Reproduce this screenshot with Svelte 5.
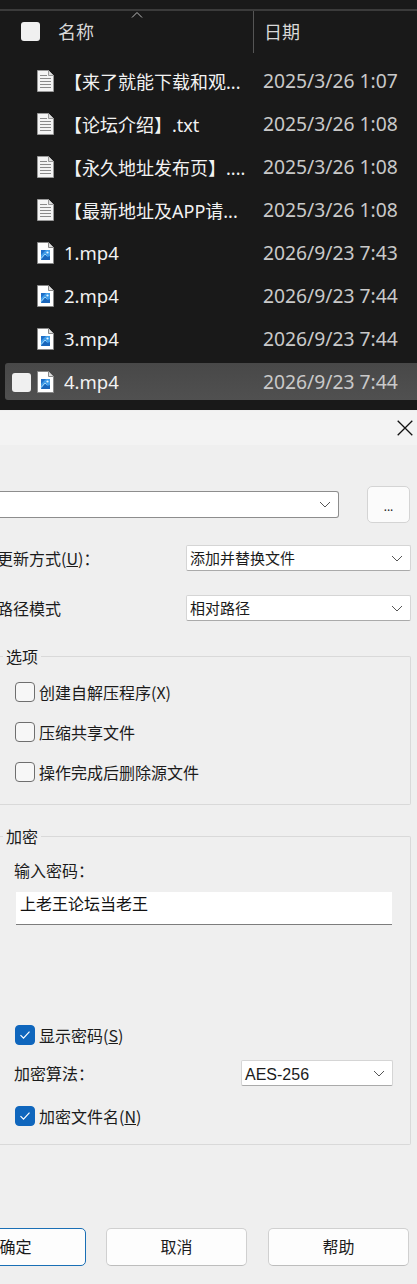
<script>
  const files = [
    { name: '【来了就能下载和观...', date: '2025/3/26 1:07', kind: 'txt' },
    { name: '【论坛介绍】.txt', date: '2025/3/26 1:08', kind: 'txt' },
    { name: '【永久地址发布页】....', date: '2025/3/26 1:08', kind: 'txt' },
    { name: '【最新地址及APP请...', date: '2025/3/26 1:08', kind: 'txt' },
    { name: '1.mp4', date: '2026/9/23 7:43', kind: 'mp4' },
    { name: '2.mp4', date: '2026/9/23 7:44', kind: 'mp4' },
    { name: '3.mp4', date: '2026/9/23 7:44', kind: 'mp4' },
    { name: '4.mp4', date: '2026/9/23 7:44', kind: 'mp4', selected: true }
  ];
</script>

{#snippet chevron()}
  <svg class="chev" width="12" height="7" viewBox="0 0 12 7"><path d="M1 1l5 5 5-5" fill="none" stroke="#555" stroke-width="1"/></svg>
{/snippet}

{#snippet check(on)}
  <span class="check" class:on>
    {#if on}
      <svg width="12" height="10" viewBox="0 0 12 10"><path d="M1.5 5.2l3 3 6-6.5" fill="none" stroke="#fff" stroke-width="1.2"/></svg>
    {/if}
  </span>
{/snippet}

<div class="page">
  <section class="explorer">
    <div class="rule"></div>
    <header class="head">
      <span class="box head-box"></span>
      <span class="head-name">名称</span>
      <svg class="sort" width="12" height="6" viewBox="0 0 12 6"><path d="M1 5.5l5-5 5 5" fill="none" stroke="#bbb" stroke-width="1"/></svg>
      <span class="sep"></span>
      <span class="head-date">日期</span>
    </header>
    <div class="rows">
      {#each files as f}
        <div class="row" class:selected={f.selected}>
          {#if f.selected}<span class="box row-box"></span>{/if}
          {#if f.kind === 'txt'}
            <svg class="ficon" width="17" height="22" viewBox="0 0 17 22">
              <path d="M0.5 0.5h11l5 5v16h-16z" fill="#f4f4f4" stroke="#999"/>
              <path d="M11.5 .5v5h5" fill="#ddd" stroke="#999"/>
              <path d="M3 5.5h7M3 8.5h11M3 11.5h11M3 14.5h11M3 17.5h11" stroke="#8a8a8a" stroke-width="1"/>
            </svg>
          {:else}
            <svg class="ficon" width="17" height="22" viewBox="0 0 17 22">
              <path d="M0.5 0.5h11l5 5v16h-16z" fill="#fff" stroke="#888"/>
              <path d="M11.5 .5v5h5" fill="#ddd" stroke="#888"/>
              <rect x="4" y="8" width="9" height="10" fill="#3f9ce8"/>
              <path d="M4 8h5l-5 5z" fill="#1f6fc8"/>
              <path d="M4 18l4-5.500 2.500 2.500 2.500-1v4z" fill="#1a66bb"/>
              <path d="M4 16.500l4-4.500 1.500 1.500" fill="none" stroke="#9fd4f7" stroke-width="1"/>
              <circle cx="10.500" cy="10.500" r="1.100" fill="#e8f5ff"/>
            </svg>
          {/if}
          <span class="fname" class:video={f.kind === 'mp4'}>{f.name}</span>
          <span class="fdate">{f.date}</span>
        </div>
      {/each}
    </div>
  </section>

  <section class="dialog">
    <div class="titlebar">
      <svg width="16" height="16" viewBox="0 0 16 16"><path d="M.7.700l14.600 14.600M15.300.700L.7 15.300" stroke="#111" stroke-width="1.300" fill="none"/></svg>
    </div>
    <div class="body">
      <div class="path-row">
        <div class="combo">{@render chevron()}</div>
        <button class="dots">...</button>
      </div>
      <div class="field-row first">
        <span class="label">更新方式(<u>U</u>)：</span>
        <div class="select wide">添加并替换文件{@render chevron()}</div>
      </div>
      <div class="field-row second">
        <span class="label">路径模式</span>
        <div class="select wide">相对路径{@render chevron()}</div>
      </div>

      <fieldset class="group options">
        <legend>选项</legend>
        <label class="opt">{@render check(false)}创建自解压程序(X)</label>
        <label class="opt">{@render check(false)}压缩共享文件</label>
        <label class="opt">{@render check(false)}操作完成后删除源文件</label>
      </fieldset>

      <fieldset class="group crypt">
        <legend>加密</legend>
        <div class="pw-label">输入密码：</div>
        <div class="pw">上老王论坛当老王</div>
        <label class="opt show">{@render check(true)}显示密码(<u>S</u>)</label>
        <div class="algo">
          <span>加密算法：</span>
          <div class="select narrow">AES-256{@render chevron()}</div>
        </div>
        <label class="opt encname">{@render check(true)}加密文件名(<u>N</u>)</label>
      </fieldset>

      <div class="actions">
        <button class="btn ok">确定</button>
        <button class="btn">取消</button>
        <button class="btn last">帮助</button>
      </div>
    </div>
  </section>
</div>

<style>
  :global(body) { margin: 0; background: #efefef; }
  .page {
    width: 417px; height: 1284px; overflow: hidden;
    font-family: "Noto Sans CJK SC", "Noto Sans", sans-serif;
  }
  .explorer { background: #191919; height: 410px; padding-top: 9px; box-sizing: border-box; }
  .rule { height: 2px; background: #3b3b3b; }
  .head { position: relative; display: flex; align-items: center; height: 41px; color: #d8d8d8; font-size: 18px; }
  .box { display: block; width: 19px; height: 19px; border-radius: 3px; background: #f0f0f0; flex: none; }
  .head-box { margin-left: 21px; }
  .head-name { margin-left: 18px; width: 195px; padding-bottom: 2px; }
  .sort { position: absolute; left: 131px; top: 1px; }
  .sep { width: 1px; height: 42px; background: #555; flex: none; }
  .head-date { margin-left: 10px; padding-bottom: 2px; }
  .rows { padding-top: 7px; }
  .row { position: relative; height: 43px; display: flex; align-items: center; margin-left: 5px; padding-left: 32px; border-radius: 3px 0 0 3px; }
  .row.selected { height: 37px; margin-top: 3px; background: linear-gradient(#484848, #505050); }
  .row-box { position: absolute; left: 7px; top: 10px; }
  .ficon { flex: none; }
  .fname { color: #f2f2f2; font-size: 18px; margin-left: 10px; width: 189px; white-space: nowrap; overflow: hidden; font-family: "Noto Sans", "Noto Sans CJK SC", sans-serif; }
  .fname.video { font-size: 18.500px; }
  .fdate { color: #c9c9c9; font-size: 19.300px; font-family: "Noto Sans", sans-serif; white-space: nowrap; margin-left: 10px; }
  .dialog { margin-top: 1px; }
  .titlebar { height: 34px; background: #f3f3f3; display: flex; justify-content: flex-end; align-items: center; padding-right: 4px; box-sizing: border-box; }
  .body { height: 839px; box-sizing: border-box; padding-right: 7px; font-size: 16px; color: #1b1b1b; }
  .path-row { display: flex; align-items: center; padding-top: 41px; }
  .combo { width: 339px; height: 27px; box-sizing: border-box; background: #fff; border: 1px solid #8d8d8d; border-left: none; border-radius: 0 3px 3px 0; display: flex; align-items: center; justify-content: flex-end; padding-right: 7px; }
  .dots { margin-left: 28px; width: 43px; height: 37px; background: #fbfbfb; border: 1px solid #d4d4d4; border-radius: 5px; color: #222; font: 12px "Noto Sans", sans-serif; padding: 4px 0 0; }
  .field-row { display: flex; align-items: center; justify-content: space-between; height: 26px; }
  .first { margin-top: 22px; }
  .second { margin-top: 24px; }
  .label { white-space: nowrap; margin-left: -3px; }
  .select { position: relative; height: 26px; box-sizing: border-box; background: #fff; border: 1px solid #d5d5d5; border-bottom-color: #aaa; border-radius: 2px; padding-left: 3px; line-height: 24px; font-size: 15px; white-space: nowrap; }
  .select .chev { position: absolute; right: 7px; top: 9px; }
  .wide { width: 225px; margin-right: -1px; }
  .narrow { width: 152px; font-family: "Liberation Sans", sans-serif; font-size: 16px; line-height: 27px; }
  .group { position: relative; margin: 0; padding: 0; border: 1px solid #d9d9d9; border-left: none; border-radius: 0 2px 2px 0; min-width: 0; box-sizing: border-box; width: 411px; }
  .group legend { padding: 0 3px; margin-left: 3px; font-size: 16px; line-height: 18px; }
  .options { height: 158px; margin-top: 26px; padding-top: 17px; }
  .crypt { height: 318px; margin-top: 22px; padding-top: 17px; }
  .opt { display: flex; align-items: center; height: 20px; margin-left: 15px; white-space: nowrap; }
  .options .opt { margin-bottom: 20px; }
  .check { width: 20px; height: 20px; box-sizing: border-box; border: 1px solid #6f6f6f; border-radius: 4px; background: #f7f7f7; margin-right: 4px; display: flex; align-items: center; justify-content: center; flex: none; }
  .check.on { background: #0f66bd; border-color: #0f66bd; }
  .pw-label { margin-left: 14px; line-height: 20px; margin-top: -2px; }
  .pw { margin: 12px 0 0 16px; width: 376px; height: 33px; box-sizing: border-box; background: #fff; border-bottom: 1px solid #7d7d7d; padding-left: 4px; line-height: 22px; color: #111; }
  .show { margin-top: 100px; }
  .algo { display: flex; align-items: center; justify-content: space-between; margin: 15px 17px 0 14px; height: 26px; }
  .encname { margin-top: 20px; }
  .actions { display: flex; gap: 20px; margin-top: 83px; margin-left: -55px; }
  .btn { width: 141px; height: 38px; box-sizing: border-box; background: #fdfdfd; border: 1px solid #d0d0d0; border-bottom-color: #bdbdbd; border-radius: 5px; font: 16px "Noto Sans CJK SC", sans-serif; color: #1b1b1b; padding: 0 0 2px; flex: none; }
  .ok { border: 1px solid #1a6fb5; }
  .last { margin-left: 1px; }
</style>
